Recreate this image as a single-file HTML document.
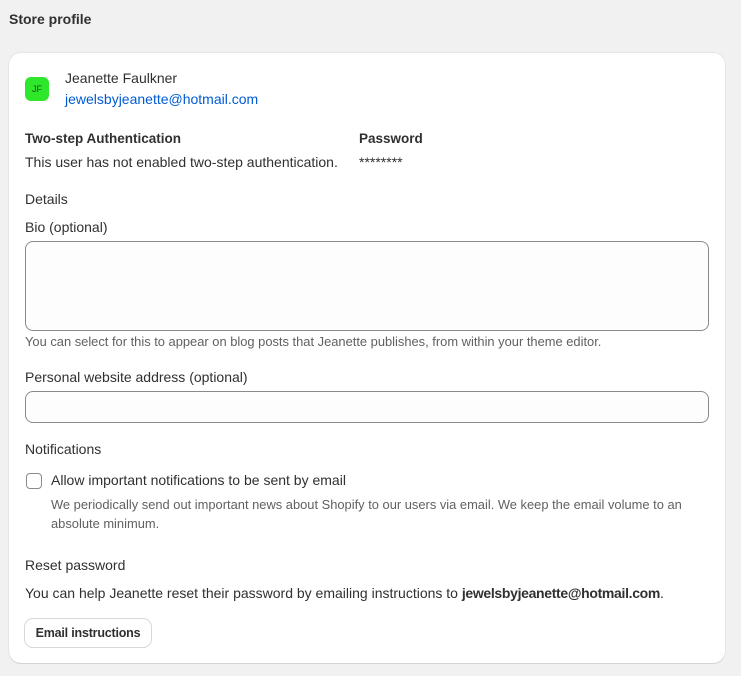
<!DOCTYPE html>
<html><head><style>
*{margin:0;padding:0;box-sizing:border-box}
body{width:741px;height:676px;background:#f1f1f1;font-family:"Liberation Sans",sans-serif;color:#303030;font-size:14px;position:relative;overflow:hidden}
.a{position:absolute;white-space:nowrap;line-height:16px}
.card{position:absolute;left:9px;top:53px;width:716px;height:610px;background:#fff;border-radius:12px;box-shadow:0 1px 0 #d4d4d4,0 0 0 1px #e6e6e6}
.b{font-weight:bold}
.s{font-size:12.9px;color:#616161}
</style></head><body>
<div class="a b" style="left:9px;top:11px;font-size:14px">Store profile</div>
<div class="card"></div>
<div class="a" style="left:25px;top:77px;width:24px;height:24px;background:#2ee62a;border-radius:6px;font-size:9px;color:#1a4d1a;text-align:center;line-height:24px">JF</div>
<div class="a" style="left:65px;top:70px">Jeanette Faulkner</div>
<div class="a" style="left:65px;top:91px;color:#005bd3">jewelsbyjeanette@hotmail.com</div>
<div class="a b" style="left:25px;top:131px;font-size:13.5px">Two-step Authentication</div>
<div class="a" style="left:25px;top:154px">This user has not enabled two-step authentication.</div>
<div class="a b" style="left:359px;top:131px;font-size:13.5px">Password</div>
<div class="a" style="left:359px;top:154px">********</div>
<div class="a" style="left:25px;top:191px">Details</div>
<div class="a" style="left:25px;top:219px">Bio (optional)</div>
<div class="a" style="left:25px;top:241px;width:684px;height:90px;border:1px solid #8a8a8a;border-radius:8px;background:#fdfdfd"></div>
<div class="a s" style="left:25px;top:334px">You can select for this to appear on blog posts that Jeanette publishes, from within your theme editor.</div>
<div class="a" style="left:25px;top:369px">Personal website address (optional)</div>
<div class="a" style="left:25px;top:391px;width:684px;height:32px;border:1px solid #8a8a8a;border-radius:8px;background:#fdfdfd"></div>
<div class="a" style="left:25px;top:441px">Notifications</div>
<div class="a" style="left:26px;top:473px;width:16px;height:16px;border:1px solid #8a8a8a;border-radius:4px"></div>
<div class="a" style="left:51px;top:472px">Allow important notifications to be sent by email</div>
<div class="a s" style="left:51px;top:497px">We periodically send out important news about Shopify to our users via email. We keep the email volume to an</div>
<div class="a s" style="left:51px;top:516px">absolute minimum.</div>
<div class="a" style="left:25px;top:557px">Reset password</div>
<div class="a" style="left:25px;top:585px">You can help Jeanette reset their password by emailing instructions to <b style="letter-spacing:-0.33px">jewelsbyjeanette@hotmail.com</b>.</div>
<div class="a b" style="left:25px;top:619px;width:126px;height:28px;border-radius:8px;background:#fff;box-shadow:0 0 0 1px #d8d8d8,0 1px 0 #c4c4c4;font-size:12.5px;letter-spacing:-0.2px;text-align:center;line-height:28px">Email instructions</div>
</body></html>
